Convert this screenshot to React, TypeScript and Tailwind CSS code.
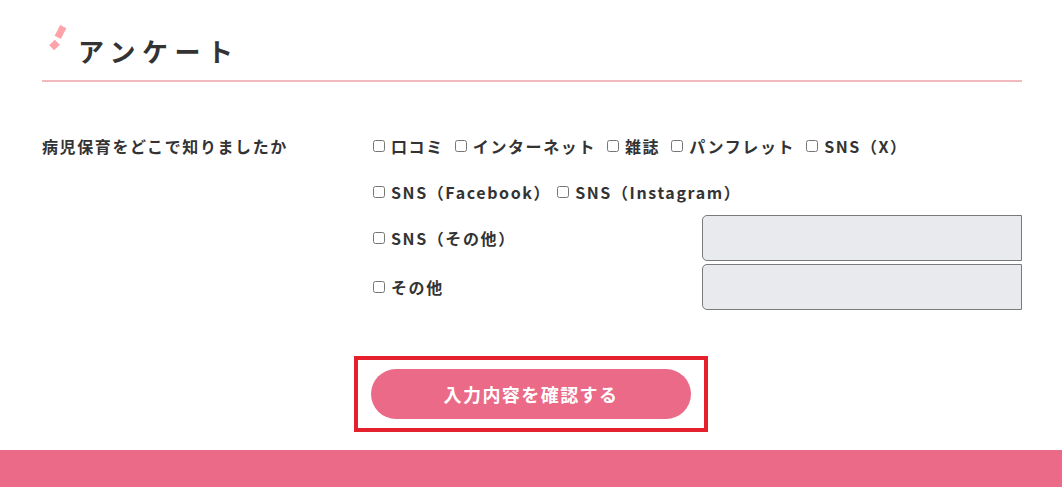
import React from "react";

const font = { fontFamily: '"Noto Sans CJK JP", "Noto Sans", sans-serif' };

function Check({ label }: { label: string }) {
  return (
    <label className="flex items-center gap-[6px] whitespace-nowrap">
      <input type="checkbox" className="m-0 h-[12px] w-[12px] shrink-0" />
      <span className="text-[16px] font-bold leading-[30px] tracking-[0.1em] text-[#333]">{label}</span>
    </label>
  );
}

export default function App() {
  return (
    <div className="min-h-[487px] w-full bg-white" style={font}>
      <div className="ml-[42px] w-[980px]">
        {/* heading */}
        <div className="relative border-b-2 border-[#f1b9bc] pb-[12px] pl-[36px] pt-[34px]">
          <span className="absolute left-[15px] top-[26px] h-[12px] w-[7px] rotate-[28deg] bg-[#ffa3aa]" />
          <span className="absolute left-[9px] top-[41px] h-[8px] w-[7px] rotate-[45deg] bg-[#ffa3aa]" />
          <h2 className="text-[26px] font-bold leading-[34px] tracking-[0.25em] text-[#333]">アンケート</h2>
        </div>

        {/* question */}
        <div className="grid grid-cols-[331px_1fr] pt-[41px]">
          <div className="flex h-[46px] items-center text-[16px] font-bold tracking-[0.1em] text-[#333]">
            病児保育をどこで知りましたか
          </div>
          <div className="flex flex-col">
            <div className="flex h-[46px] items-center gap-x-[11px]">
              <Check label="口コミ" />
              <Check label="インターネット" />
              <Check label="雑誌" />
              <Check label="パンフレット" />
              <Check label="SNS（X）" />
            </div>
            <div className="flex h-[46px] items-center gap-x-[6px]">
              <Check label="SNS（Facebook）" />
              <Check label="SNS（Instagram）" />
            </div>
            <div className="flex h-[46px] items-center justify-between">
              <Check label="SNS（その他）" />
              <input
                type="text"
                className="h-[46px] w-[320px] rounded-l-[5px] border border-[#7a7a7a] bg-[#e8eaed] outline-none"
              />
            </div>
            <div className="mt-[3px] flex h-[46px] items-center justify-between">
              <Check label="その他" />
              <input
                type="text"
                className="h-[46px] w-[320px] rounded-l-[5px] border border-[#7a7a7a] bg-[#e8eaed] outline-none"
              />
            </div>
          </div>
        </div>
      </div>

      {/* submit */}
      <div className="flex justify-center pt-[46px]">
        <div className="flex h-[76px] w-[354px] items-center justify-center border-4 border-[#e3202c]">
          <button className="h-[50px] w-[320px] rounded-full bg-[#ea6a88] text-[18px] font-bold tracking-[0.08em] text-white">
            入力内容を確認する
          </button>
        </div>
      </div>

      <div className="mt-[18px] h-[37px] bg-[#ea6a88]" />
    </div>
  );
}
